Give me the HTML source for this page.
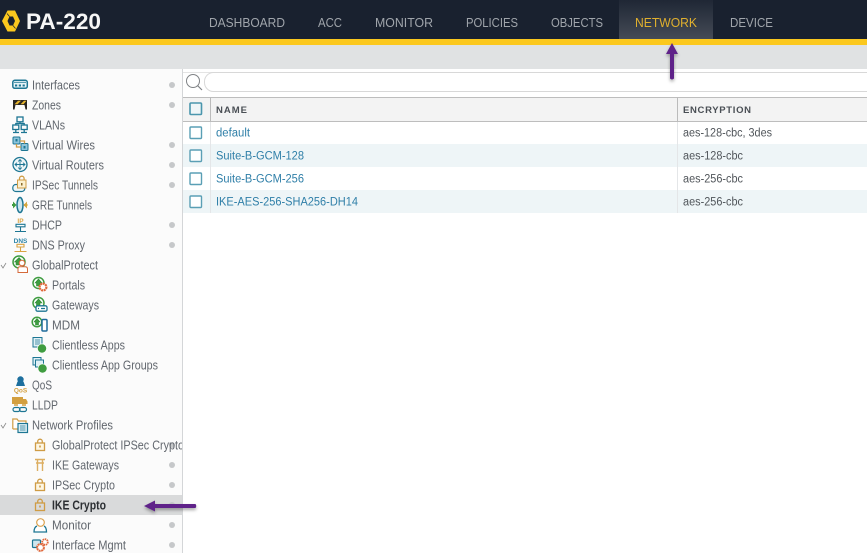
<!DOCTYPE html>
<html><head><meta charset="utf-8">
<style>
html,body{margin:0;padding:0;background:#fff}
svg{display:block;font-family:"Liberation Sans",sans-serif}
.n{font-size:12.5px;fill:#a0a5ab}
.s{font-size:12.5px;fill:#62676e}
.h{font-size:9.5px;fill:#4a4f55;font-weight:bold}
.l{font-size:11.5px;fill:#2f7fa8}
.c{font-size:11.5px;fill:#50555a}
.d{fill:#c6c8ca}
.o{fill:none;stroke:#cf9c45;stroke-width:1.3}
.b{fill:none;stroke:#1d7693;stroke-width:1.3}
.cb{fill:#fff;stroke:#5a9fb5;stroke-width:1.4}
.gl{fill:#3f9c40;stroke:#2e8a35;stroke-width:.6}
</style></head><body>
<svg width="867" height="553" viewBox="0 0 867 553" xmlns="http://www.w3.org/2000/svg">
<defs>
<linearGradient id="tab" x1="0" y1="0" x2="0" y2="1"><stop offset="0" stop-color="#1f2735"/><stop offset="1" stop-color="#454b56"/></linearGradient>
<filter id="sh" x="-30%" y="-30%" width="160%" height="160%"><feDropShadow dx="0" dy="2" stdDeviation="1.5" flood-color="#000" flood-opacity=".35"/></filter>
<clipPath id="sb"><rect x="0" y="69" width="182" height="484"/></clipPath>
</defs>
<rect width="867" height="553" fill="#fff"/>
<rect width="867" height="39" fill="#19212f"/>
<rect x="619" width="94" height="39" fill="url(#tab)"/>
<rect y="39" width="867" height="6" fill="#fbc81e"/>
<rect y="45" width="867" height="24" fill="#e0e2e3"/>
<rect y="69" width="182" height="484" fill="#fbfbfb"/>
<rect x="182" y="69" width="1" height="484" fill="#d4d6d8"/>

<!-- logo -->
<path d="M7.500 10.500H15L20 21L15 31.500H7.500L2 21Z" fill="#fbc81e"/>
<path d="M9.500 16.500H13L15 21L13 25.500H9.500L7.500 21Z" fill="#19212f"/>
<path d="M9.500 16.500L7 13.500M13 25.500L15.500 28.500" stroke="#19212f" stroke-width=".7"/>
<text x="26" y="29" font-size="22" font-weight="bold" fill="#f6f6f6" textLength="75" lengthAdjust="spacingAndGlyphs">PA-220</text>

<!-- nav -->
<text class="n" x="209" y="27" textLength="76" lengthAdjust="spacingAndGlyphs">DASHBOARD</text>
<text class="n" x="318" y="27" textLength="24" lengthAdjust="spacingAndGlyphs">ACC</text>
<text class="n" x="375" y="27" textLength="58" lengthAdjust="spacingAndGlyphs">MONITOR</text>
<text class="n" x="466" y="27" textLength="52" lengthAdjust="spacingAndGlyphs">POLICIES</text>
<text class="n" x="551" y="27" textLength="52" lengthAdjust="spacingAndGlyphs">OBJECTS</text>
<text class="n" x="635" y="27" textLength="62" lengthAdjust="spacingAndGlyphs" style="fill:#e0b02e">NETWORK</text>
<text class="n" x="730" y="27" textLength="43" lengthAdjust="spacingAndGlyphs">DEVICE</text>

<!-- search -->
<rect x="183" y="69" width="684" height="28" fill="#fff"/>
<rect x="183" y="72" width="684" height="1" fill="#e4e4e4"/>
<rect x="204.500" y="72.500" width="680" height="19" rx="9" fill="#fff" stroke="#d8d8d8"/>
<circle cx="193" cy="81" r="6.500" fill="none" stroke="#808386" stroke-width="1"/>
<path d="M197.500 85.500L202 90" stroke="#808386" stroke-width="1.2"/>

<!-- table header -->
<rect x="183" y="97" width="684" height="25" fill="#f3f3f3"/>
<rect x="183" y="97" width="684" height="1" fill="#bdbdbd"/>
<rect x="183" y="121" width="684" height="1" fill="#bdbdbd"/>
<rect x="210" y="97" width="1" height="25" fill="#bbb"/>
<rect x="677" y="97" width="1" height="25" fill="#bbb"/>
<text class="h" x="216" y="113" textLength="31" lengthAdjust="spacing">NAME</text>
<text class="h" x="683" y="113" textLength="68" lengthAdjust="spacing">ENCRYPTION</text>

<!-- rows -->
<rect x="183" y="144" width="684" height="23" fill="#eef5f7"/>
<rect x="183" y="190" width="684" height="23" fill="#eef5f7"/>
<rect x="210" y="122" width="1" height="91" fill="#e4e6e8"/>
<rect x="677" y="122" width="1" height="91" fill="#e4e6e8"/>
<rect x="190" y="103" width="11.500" height="11.500" rx="1" fill="#eef5f7" stroke="#4a96ad" stroke-width="1.6"/>
<rect class="cb" x="190" y="127" width="11.500" height="11.500" rx="1"/>
<rect class="cb" x="190" y="150" width="11.500" height="11.500" rx="1"/>
<rect class="cb" x="190" y="173" width="11.500" height="11.500" rx="1"/>
<rect class="cb" x="190" y="196" width="11.500" height="11.500" rx="1"/>
<text class="l" x="216" y="136.500" textLength="34" lengthAdjust="spacingAndGlyphs">default</text>
<text class="l" x="216" y="159.500" textLength="88" lengthAdjust="spacingAndGlyphs">Suite-B-GCM-128</text>
<text class="l" x="216" y="182.500" textLength="88" lengthAdjust="spacingAndGlyphs">Suite-B-GCM-256</text>
<text class="l" x="216" y="205.500" textLength="142" lengthAdjust="spacingAndGlyphs">IKE-AES-256-SHA256-DH14</text>
<text class="c" x="683" y="136.500" textLength="89" lengthAdjust="spacingAndGlyphs">aes-128-cbc, 3des</text>
<text class="c" x="683" y="159.500" textLength="60" lengthAdjust="spacingAndGlyphs">aes-128-cbc</text>
<text class="c" x="683" y="182.500" textLength="60" lengthAdjust="spacingAndGlyphs">aes-256-cbc</text>
<text class="c" x="683" y="205.500" textLength="60" lengthAdjust="spacingAndGlyphs">aes-256-cbc</text>

<!-- sidebar selection -->
<rect y="495" width="182" height="20" fill="#d9dadb"/>

<!-- dots -->
<g class="d">
<circle cx="172" cy="85" r="3"/><circle cx="172" cy="105" r="3"/><circle cx="172" cy="145" r="3"/><circle cx="172" cy="165" r="3"/><circle cx="172" cy="185" r="3"/><circle cx="172" cy="225" r="3"/><circle cx="172" cy="245" r="3"/><circle cx="172" cy="445" r="3"/><circle cx="172" cy="465" r="3"/><circle cx="172" cy="485" r="3"/><circle cx="172" cy="505" r="3"/><circle cx="172" cy="525" r="3"/><circle cx="172" cy="545" r="3"/>
</g>

<!-- sidebar text -->
<g clip-path="url(#sb)">
<text class="s" x="32" y="89.500" textLength="48" lengthAdjust="spacingAndGlyphs">Interfaces</text>
<text class="s" x="32" y="109.500" textLength="29" lengthAdjust="spacingAndGlyphs">Zones</text>
<text class="s" x="32" y="129.500" textLength="33" lengthAdjust="spacingAndGlyphs">VLANs</text>
<text class="s" x="32" y="149.500" textLength="63" lengthAdjust="spacingAndGlyphs">Virtual Wires</text>
<text class="s" x="32" y="169.500" textLength="72" lengthAdjust="spacingAndGlyphs">Virtual Routers</text>
<text class="s" x="32" y="189.500" textLength="66" lengthAdjust="spacingAndGlyphs">IPSec Tunnels</text>
<text class="s" x="32" y="209.500" textLength="60" lengthAdjust="spacingAndGlyphs">GRE Tunnels</text>
<text class="s" x="32" y="229.500" textLength="30" lengthAdjust="spacingAndGlyphs">DHCP</text>
<text class="s" x="32" y="249.500" textLength="53" lengthAdjust="spacingAndGlyphs">DNS Proxy</text>
<text class="s" x="32" y="269.500" textLength="66" lengthAdjust="spacingAndGlyphs">GlobalProtect</text>
<text class="s" x="52" y="289.500" textLength="33" lengthAdjust="spacingAndGlyphs">Portals</text>
<text class="s" x="52" y="309.500" textLength="47" lengthAdjust="spacingAndGlyphs">Gateways</text>
<text class="s" x="52" y="329.500" textLength="28" lengthAdjust="spacingAndGlyphs">MDM</text>
<text class="s" x="52" y="349.500" textLength="73" lengthAdjust="spacingAndGlyphs">Clientless Apps</text>
<text class="s" x="52" y="369.500" textLength="106" lengthAdjust="spacingAndGlyphs">Clientless App Groups</text>
<text class="s" x="32" y="389.500" textLength="20" lengthAdjust="spacingAndGlyphs">QoS</text>
<text class="s" x="32" y="409.500" textLength="26" lengthAdjust="spacingAndGlyphs">LLDP</text>
<text class="s" x="32" y="429.500" textLength="81" lengthAdjust="spacingAndGlyphs">Network Profiles</text>
<text class="s" x="52" y="449.500" textLength="132" lengthAdjust="spacingAndGlyphs">GlobalProtect IPSec Crypto</text>
<text class="s" x="52" y="469.500" textLength="67" lengthAdjust="spacingAndGlyphs">IKE Gateways</text>
<text class="s" x="52" y="489.500" textLength="63" lengthAdjust="spacingAndGlyphs">IPSec Crypto</text>
<text class="s" x="52" y="509.500" textLength="54" lengthAdjust="spacingAndGlyphs" style="font-weight:bold;fill:#2c2f33">IKE Crypto</text>
<text class="s" x="52" y="529.500" textLength="39" lengthAdjust="spacingAndGlyphs">Monitor</text>
<text class="s" x="52" y="549.500" textLength="74" lengthAdjust="spacingAndGlyphs">Interface Mgmt</text>
</g>

<!-- tree chevrons -->
<path d="M1 265L3 268L6 263M1 425L3 428L6 423" fill="none" stroke="#888" stroke-width=".8"/>

<!-- interfaces -->
<rect x="12.800" y="80.300" width="14.500" height="8" rx="2" fill="#e6f3f7" stroke="#1d7693" stroke-width="1.5"/>
<path d="M14 82.300H26" stroke="#1d7693" stroke-width=".8"/>
<path d="M15 84.500h2.200v2h-2.200zM18.800 84.500h2.200v2h-2.200zM22.600 84.500h2.200v2h-2.200z" fill="#1d7693"/>
<!-- zones -->
<path d="M13 100H27V109.500H25.500L24.500 105H15.500L14.500 109.500H13Z" fill="#2a2622"/>
<path d="M14.500 104.200L18 100.800H21L17.500 104.200ZM20.500 104.200L24 100.800H26.500L23.500 104.200Z" fill="#e7b52c"/>
<!-- vlans -->
<g class="b"><rect x="17" y="117" width="6" height="4.800"/><rect x="12.800" y="125" width="6" height="4.500"/><rect x="21.200" y="125" width="6" height="4.500"/><path d="M20 121.800V124M15.800 125V123.500H24.200V125M15.800 129.500V132M24.200 129.500V132M13 132.500H19M21 132.500H27"/></g>
<!-- virtual wires -->
<rect x="13" y="137" width="7" height="7" rx="1" fill="#8dc5dc" stroke="#1d7693"/>
<rect x="21" y="143.500" width="7" height="7" rx="1" fill="#8dc5dc" stroke="#1d7693"/>
<path d="M20 141H24.500V143.500M16.500 144V147H21" class="o"/>
<rect x="15.500" y="139" width="2" height="2.500" fill="#1d7693"/><rect x="23.500" y="146" width="2" height="2.500" fill="#1d7693"/>
<!-- virtual routers -->
<circle cx="20" cy="164.500" r="7" fill="#eef6f8" stroke="#1d7693" stroke-width="1.3"/>
<path d="M20 160v9M15.500 164.500h9M18.200 161.500l1.800-2 1.800 2M18.200 167.500l1.800 2 1.800-2M17 162.700l-2 1.800 2 1.800M23 162.700l2 1.800-2 1.800" fill="none" stroke="#1d7693" stroke-width=".9"/>
<!-- ipsec tunnels -->
<rect x="12.800" y="184.500" width="12" height="7" rx="3" fill="#eef6f8" stroke="#1d7693" stroke-width="1.2"/>
<rect x="17.500" y="180" width="8.500" height="8" fill="#fbf0cf" stroke="#cf9c45"/>
<path d="M19.500 180v-1.500a2.300 2.300 0 0 1 4.600 0v1.500" class="o"/>
<rect x="21" y="183" width="1.500" height="2.500" fill="#8a6a2a"/>
<!-- gre -->
<path d="M12 205h3.500" stroke="#3f9c40" stroke-width="2"/>
<path d="M24 205h3.500" stroke="#d6a63f" stroke-width="2"/>
<ellipse cx="20" cy="205" rx="3" ry="7.500" fill="#cde6ef" stroke="#1d7693" stroke-width="1.5"/>
<path d="M16.500 205l-3.500-3.500v7z" fill="#3f9c40"/><path d="M23.500 205l3.500-3.500v7z" fill="#d6a63f"/>
<!-- dhcp -->
<text x="20.500" y="223" font-size="6.500" text-anchor="middle" fill="#d9a342" font-weight="bold">IP</text>
<path d="M16 224.300H25V226.800H16ZM20.500 226.800V231M15 231.500H26" fill="none" stroke="#1d7693" stroke-width="1.1"/>
<!-- dns -->
<text x="20.500" y="243" font-size="6.500" text-anchor="middle" fill="#2f86a8" font-weight="bold">DNS</text>
<path d="M17 244.300H24V247H17ZM20.500 247V251M14.500 251.500H26.500" fill="none" stroke="#d9a342" stroke-width="1.1"/>
<!-- globalprotect -->
<circle cx="19" cy="262" r="6" fill="#fff" stroke="#3f9c40" stroke-width="1.5"/>
<path d="M19 257.500L23 262H20.500V265H16V262H14.500Z" class="gl"/>
<circle cx="22" cy="263" r="2.800" fill="#fff" stroke="#d56a3b"/>
<path d="M18 272.500V269Q18 266.800 20 266.800H25Q27.500 266.800 27.500 269V272.500Z" fill="#fff" stroke="#d56a3b"/>
<!-- portals -->
<circle cx="38.500" cy="283" r="5.500" fill="#fff" stroke="#3f9c40" stroke-width="1.5"/>
<path d="M38.500 279L42 283H40V286H36.500V283H35Z" class="gl"/>
<circle cx="43" cy="287" r="3.400" fill="#fff" stroke="#e0673a" stroke-width="2.2" stroke-dasharray="2 .6"/>
<!-- gateways -->
<circle cx="38.500" cy="303" r="5.500" fill="#fff" stroke="#3f9c40" stroke-width="1.5"/>
<path d="M38.500 299L42 303H40V306H36.500V303H35Z" class="gl"/>
<rect x="36" y="305.800" width="11" height="5.400" rx="1.500" fill="#fff" stroke="#1d7693" stroke-width="1.3"/>
<path d="M38 308.500H39M41 308.500H45" stroke="#1d7693" stroke-width="1.2"/>
<!-- mdm -->
<circle cx="37" cy="322" r="4.800" fill="#fff" stroke="#3f9c40" stroke-width="1.5"/>
<path d="M37 318.500L40 322H38.500V325H35.500V322H34Z" class="gl"/>
<rect x="42" y="319.500" width="5" height="11.500" rx="1" fill="#fff" stroke="#1d6a9a" stroke-width="1.5"/>
<!-- clientless apps -->
<rect x="33" y="337.500" width="9" height="9.500" fill="#dff0f5" stroke="#1d7693"/>
<path d="M35 340H40M35 342H40M35 344H40" stroke="#1d7693" stroke-width=".8"/>
<circle cx="42" cy="348.500" r="4.600" fill="#3f9c40" stroke="#fff" stroke-width=".7"/>
<!-- groups -->
<rect x="33" y="357.500" width="8" height="7.500" fill="#dff0f5" stroke="#1d7693"/>
<rect x="35.500" y="360" width="8" height="7" fill="#dff0f5" stroke="#1d7693"/>
<circle cx="42.500" cy="368.500" r="4.600" fill="#3f9c40" stroke="#fff" stroke-width=".7"/>
<!-- qos -->
<circle cx="20.500" cy="379.500" r="3.200" fill="#1d6f9e"/>
<path d="M16 386L17.500 381.500H23.500L25 386Z" fill="#1d6f9e"/>
<text x="20.500" y="392.500" font-size="6.500" text-anchor="middle" fill="#d39f3f" font-weight="bold">QoS</text>
<!-- lldp -->
<rect x="12" y="397" width="11" height="7" fill="#d39f3f"/>
<path d="M23 399H26L27.500 401.500V404H23Z" fill="#d39f3f"/>
<path d="M14 405h4M22 405h4" stroke="#d39f3f" stroke-width="1.6"/>
<rect x="13" y="407.500" width="7" height="4" rx="2" fill="none" stroke="#1d7693" stroke-width="1.2"/>
<rect x="19.500" y="407.500" width="7" height="4" rx="2" fill="none" stroke="#1d7693" stroke-width="1.2"/>
<!-- network profiles -->
<path d="M12.800 429V419H17L18.500 421H26V423M12.800 429H18" fill="#fff" stroke="#cf9c45" stroke-width="1.2"/>
<rect x="18" y="423.500" width="9.500" height="9" fill="#dff0f5" stroke="#1d7693" stroke-width="1.2"/>
<path d="M20 426H25.500M20 428H25.500M20 430H25.500" stroke="#1d7693" stroke-width=".8"/>
<!-- locks -->
<rect x="35.500" y="443" width="9" height="7.500" class="o" style="fill:#fdf6e3"/><path d="M37.700 443v-1.500a2.300 2.300 0 0 1 4.600 0v1.500" class="o"/><rect x="39.200" y="445.500" width="1.600" height="2" fill="#cf9c45"/>
<rect x="35.500" y="483" width="9" height="7.500" class="o" style="fill:#fdf6e3"/><path d="M37.700 483v-1.500a2.300 2.300 0 0 1 4.600 0v1.500" class="o"/><rect x="39.200" y="485.500" width="1.600" height="2" fill="#cf9c45"/>
<rect x="35.500" y="503" width="9" height="7.500" class="o"/><path d="M37.700 503v-1.500a2.300 2.300 0 0 1 4.600 0v1.500" class="o"/><rect x="39.200" y="505.500" width="1.600" height="2" fill="#cf9c45"/>
<!-- ike gateways -->
<path d="M35 459.500H45M36 463H44M37.500 459.500V471M42.500 459.500V471" fill="none" stroke="#dcae62" stroke-width="1.4"/>
<!-- monitor -->
<path d="M37 526C34.500 527 34 530 34 532H46.500C46.500 530 46 527 44 526" fill="#fff" stroke="#1d7693" stroke-width="1.3"/>
<circle cx="40.500" cy="522.500" r="3.800" fill="#fff" stroke="#dba250" stroke-width="1.2"/>
<!-- interface mgmt -->
<rect x="32.500" y="540" width="8" height="7.500" rx="1" fill="#cfe6ee" stroke="#1d7693" stroke-width="1.2"/>
<circle cx="40.500" cy="547.500" r="3.400" fill="#fff" stroke="#e0673a" stroke-width="2" stroke-dasharray="2 .6"/>
<circle cx="45" cy="542" r="2.800" fill="#fff" stroke="#e0673a" stroke-width="1.8" stroke-dasharray="1.5 .6"/>

<!-- arrows -->
<g filter="url(#sh)" fill="#5e2189">
<path d="M666 54L672 43L678 54H674V78.500Q672 80.500 670 78.500V54Z"/>
<path d="M155 500.500L144 506L155 511.500V508H195.500Q197 506 195.500 504H155Z"/>
</g>
</svg>
</body></html>
